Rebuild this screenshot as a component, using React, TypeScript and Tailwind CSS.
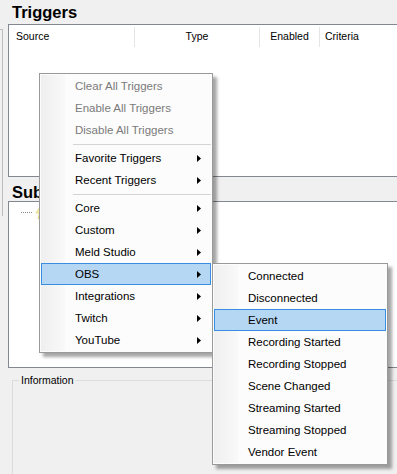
import React from 'react'

type Entry = { label: string; arrow?: boolean; disabled?: boolean; hot?: boolean } | 'sep'

const mainMenu: Entry[] = [
  { label: 'Clear All Triggers', disabled: true },
  { label: 'Enable All Triggers', disabled: true },
  { label: 'Disable All Triggers', disabled: true },
  'sep',
  { label: 'Favorite Triggers', arrow: true },
  { label: 'Recent Triggers', arrow: true },
  'sep',
  { label: 'Core', arrow: true },
  { label: 'Custom', arrow: true },
  { label: 'Meld Studio', arrow: true },
  { label: 'OBS', arrow: true, hot: true },
  { label: 'Integrations', arrow: true },
  { label: 'Twitch', arrow: true },
  { label: 'YouTube', arrow: true },
]

const obsMenu: Entry[] = [
  { label: 'Connected' },
  { label: 'Disconnected' },
  { label: 'Event', hot: true },
  { label: 'Recording Started' },
  { label: 'Recording Stopped' },
  { label: 'Scene Changed' },
  { label: 'Streaming Started' },
  { label: 'Streaming Stopped' },
  { label: 'Vendor Event' },
]

function Arrow() {
  return (
    <svg width="4" height="7" viewBox="0 0 4 7" className="shrink-0 -mt-[2px]">
      <polygon points="0,0 4,3.5 0,7" fill="#000" />
    </svg>
  )
}

function Menu({ items, className }: { items: Entry[]; className: string }) {
  return (
    <div
      className={`absolute border border-[#999999] bg-[#fcfcfc] p-px shadow-[4px_4px_3px_rgba(0,0,0,0.35)] ${className}`}
    >
      <div className="absolute left-px top-px bottom-px w-[24px] bg-gradient-to-r from-[#efefef] to-[#f9f9f9]" />
      <div className="relative flex flex-col">
        {items.map((it, i) =>
          it === 'sep' ? (
            <div key={i} className="h-[6px] flex items-center pl-[32px]">
              <div className="h-px w-full bg-[#d4d4d4]" />
            </div>
          ) : (
            <div
              key={i}
              className={`h-[22px] flex items-center justify-between pt-[2px] pl-[33px] pr-[9px] border ${
                it.hot ? 'bg-[#b5d7f3] border-[#3a8ee0]' : 'border-transparent'
              } ${it.disabled ? 'text-[#7a7a7a]' : 'text-black'}`}
            >
              <span>{it.label}</span>
              {it.arrow && <Arrow />}
            </div>
          )
        )}
      </div>
    </div>
  )
}

export default function App() {
  return (
    <div className="relative w-[397px] h-[474px] overflow-hidden bg-[#f0f0f0] font-['Liberation_Sans',Arial,sans-serif] text-black">
      <div className="flex h-full">
        <div className="w-[3px] shrink-0">
          <div className="mt-[29px] h-[187px] border-t border-r border-[#bcbcbc]" />
        </div>

        <div className="flex-1 flex flex-col pl-[5px]">
          <div className="h-[24px] pl-[4px] text-[16.5px] font-bold leading-[24px]">Triggers</div>

          <div className="h-[153px] shrink-0 border border-r-0 border-[#828790] bg-white">
            <div className="flex h-[24px] text-[10.5px]">
              <div className="w-[125px] flex items-center pl-[7px]">Source</div>
              <div className="w-px my-[2px] bg-[#e5e5e5]" />
              <div className="w-[124px] flex items-center justify-center">Type</div>
              <div className="w-px my-[2px] bg-[#e5e5e5]" />
              <div className="w-[59px] flex items-center justify-center">Enabled</div>
              <div className="w-px my-[2px] bg-[#e5e5e5]" />
              <div className="flex-1 flex items-center pl-[5px]">Criteria</div>
            </div>
          </div>

          <div className="h-[24px] pl-[4px] pt-[3px] text-[16.5px] font-bold leading-[24px] whitespace-nowrap">
            Subactions
          </div>

          <div className="h-[167px] shrink-0 border border-r-0 border-[#828790] bg-white">
            <div className="flex items-center h-[18px] mt-[1px] pl-[12px]">
              <div className="w-[11px] border-t border-dotted border-[#8a8a8a]" />
              <svg width="10" height="14" viewBox="0 0 10 14" className="ml-[3px]">
                <polygon points="6,0 1,8 4.5,8 3,14 9,5 5.5,5 7,0" fill="#fbeeb0" stroke="#e3cf7a" strokeWidth="0.8" />
              </svg>
            </div>
          </div>

          <fieldset className="mt-[6px] ml-[4px] -mr-[10px] h-[200px] shrink-0 border border-[#dcdcdc]">
            <legend className="ml-[6px] px-[2px] text-[10.5px] leading-[12px]">Information</legend>
          </fieldset>
        </div>
      </div>

      <Menu items={mainMenu} className="left-[39px] top-[73px] w-[174px] text-[11.5px]" />
      <Menu items={obsMenu} className="left-[212px] top-[263px] w-[176px] text-[11.5px]" />
    </div>
  )
}
